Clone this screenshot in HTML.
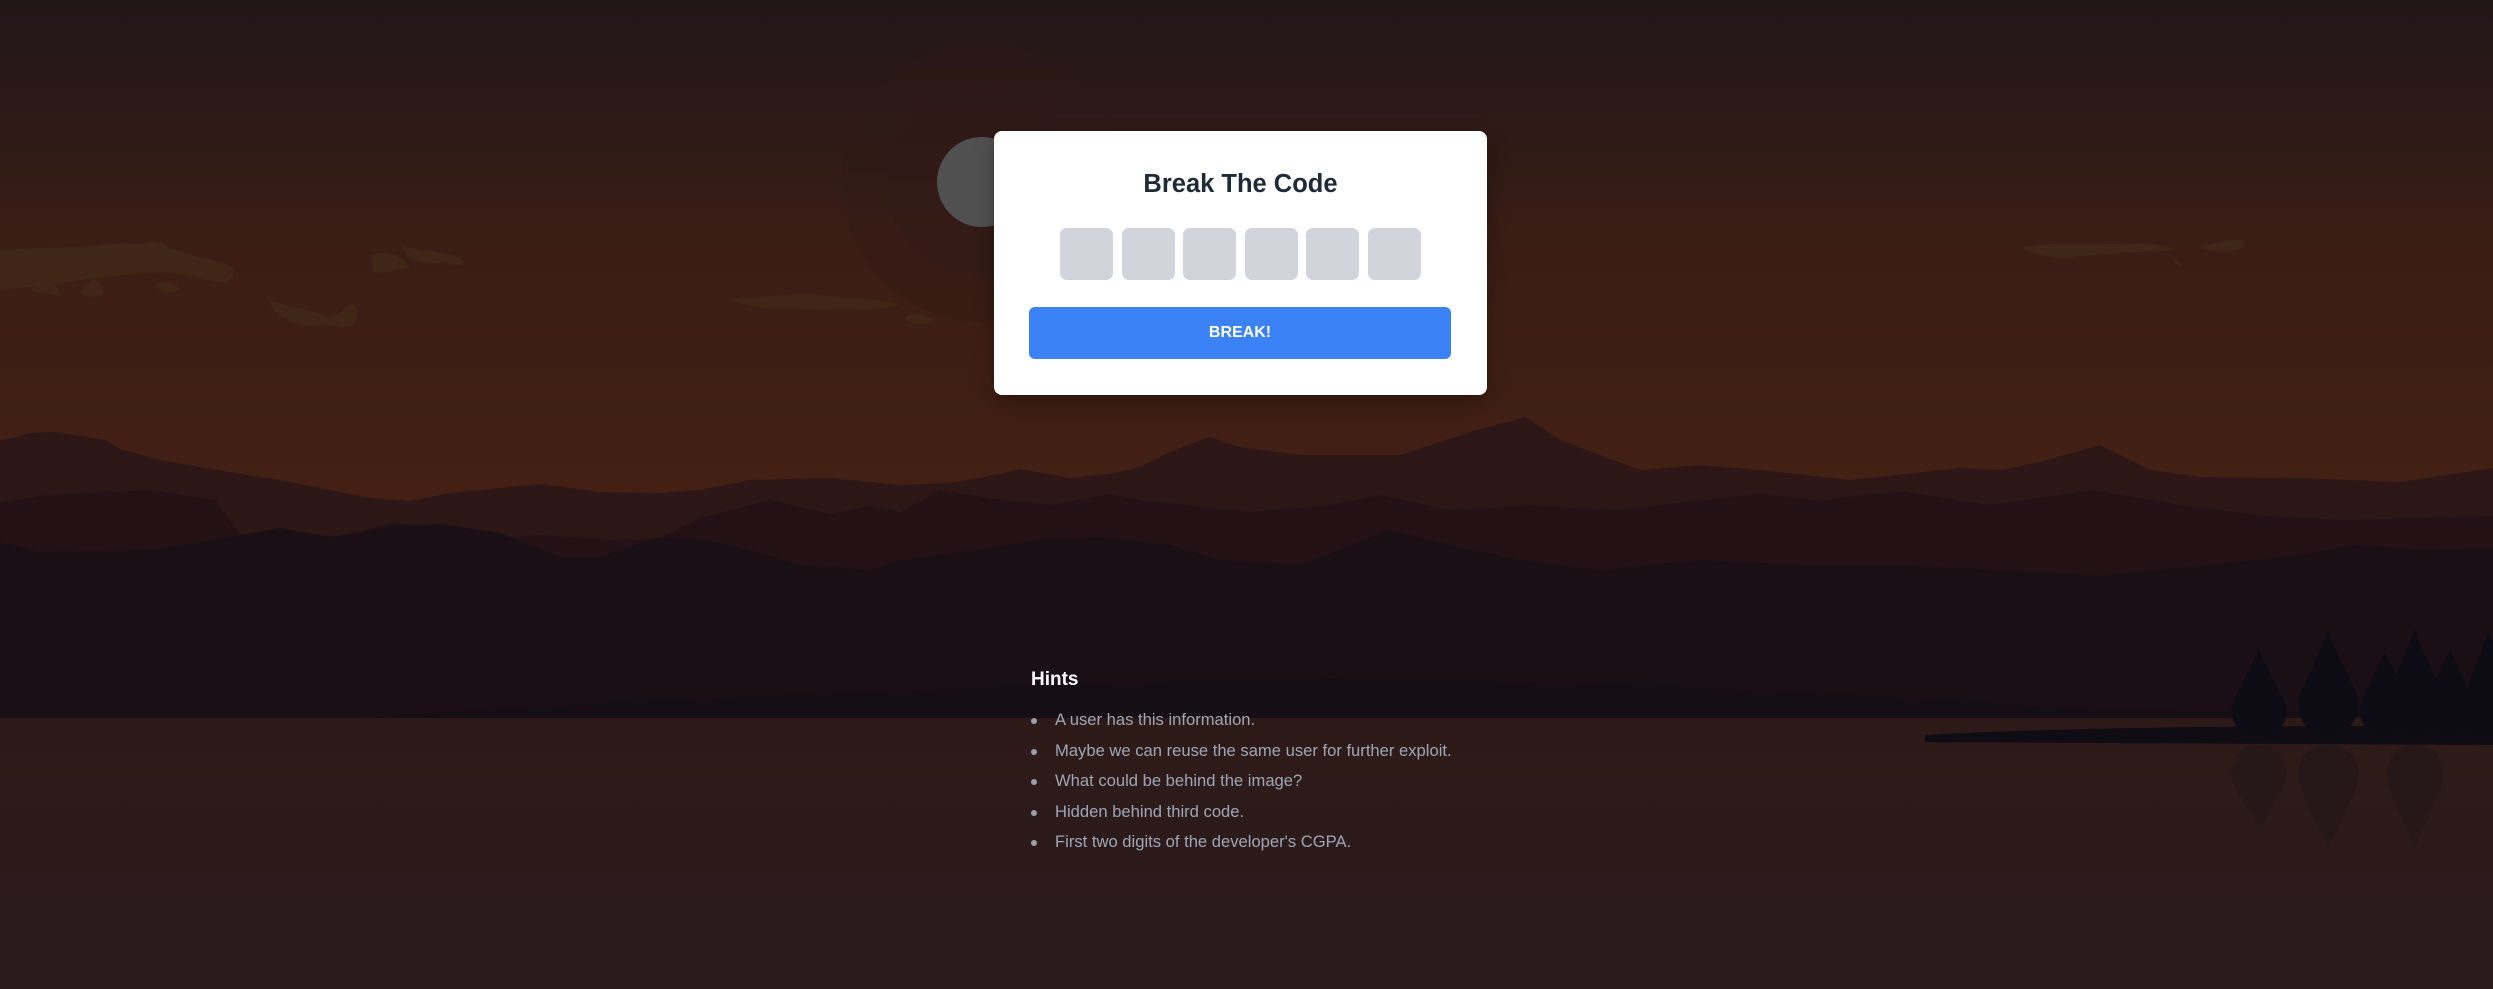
<!DOCTYPE html>
<html><head><meta charset="utf-8"><style>
html,body{margin:0;padding:0;width:2493px;height:989px;overflow:hidden;background:#2c1b1d;font-family:"Liberation Sans",sans-serif}
svg.bg{position:absolute;left:0;top:0}
.card{position:absolute;left:994px;top:131px;width:493px;height:264px;background:#fff;border-radius:8px;box-shadow:0 8px 20px rgba(0,0,0,.3)}
.title{position:absolute;left:0;width:493px;top:39px;text-align:center;font-size:25.5px;font-weight:bold;color:#1f2937}
.box{position:absolute;top:97px;width:53px;height:52px;background:#d1d5db;border-radius:7px}
.btn{position:absolute;left:35px;top:176px;width:422px;height:52px;background:#3b82f6;border-radius:6px;color:#fff;font-weight:bold;font-size:16px;text-align:center;line-height:52px}
.hints{position:absolute;left:1031px;top:669px;color:#fff;font-size:19px;font-weight:bold}
ul{position:absolute;left:1031px;top:705px;margin:0;padding:0;list-style:none;color:#9ea6b6;font-size:16.6px;font-weight:300}
li{height:30.6px;line-height:30.6px;position:relative;padding-left:24px}
li:before{content:"";position:absolute;left:0;top:13px;width:6px;height:6px;border-radius:50%;background:#9aa0aa}
</style></head><body>
<svg class="bg" width="2493" height="989" viewBox="0 0 2493 989">
<defs>
<linearGradient id="sky" x1="0" y1="0" x2="0" y2="1">
<stop offset="0" stop-color="#211619"/><stop offset="0.45" stop-color="#3a1d15"/><stop offset="1" stop-color="#442013"/></linearGradient>
<linearGradient id="wat" x1="0" y1="0" x2="0" y2="1">
<stop offset="0" stop-color="#2d1a18"/><stop offset="1" stop-color="#2c1b1e"/></linearGradient>
</defs>
<rect width="2493" height="520" fill="url(#sky)"/>
<circle cx="982" cy="182" r="140" fill="#2e1a17" opacity=".3"/>
<circle cx="982" cy="182" r="95" fill="#321b16" opacity=".35"/>
<circle cx="982" cy="182" r="45" fill="#505050"/>
<g fill="#3f2616">
<path d="M0 251 C40 245 70 250 100 245 C140 238 180 250 200 258 C230 262 245 270 225 283 C200 280 180 270 150 273 C100 275 60 285 0 290Z"/>
<path d="M138 245 C150 238 170 243 168 250 C160 255 140 252 138 245Z"/>
<path d="M180 270 C185 262 198 264 200 268 C196 274 183 274 180 270Z"/>
<path d="M155 285 C160 280 178 280 180 290 C170 293 158 292 155 285Z"/>
<path d="M30 290 L48 280 C55 285 60 290 60 297 C50 292 38 295 30 290Z"/>
<path d="M80 290 L95 278 C100 283 105 290 103 295 C95 298 82 298 80 290Z"/>
<path d="M270 300 C300 310 320 312 330 318 C345 315 345 300 355 305 C362 315 355 330 340 327 C320 322 310 330 290 322 C280 315 270 310 270 300Z"/>
<path d="M372 255 C390 250 400 255 410 268 C395 270 380 275 373 272 C372 265 372 258 372 255Z"/>
<path d="M402 245 C420 252 440 250 460 258 C470 265 460 268 445 262 C430 265 420 262 410 258 C403 250 402 248 402 245Z"/>
<path d="M730 298 C760 300 790 290 830 296 C860 300 890 300 900 305 C870 312 820 308 770 308 C745 306 728 300 730 298Z"/>
<path d="M905 318 C915 310 930 316 935 320 C925 325 910 325 905 318Z"/>
<path d="M2022 248 C2040 242 2080 244 2120 244 C2140 242 2170 245 2175 250 C2150 252 2110 252 2070 258 C2045 258 2030 252 2022 248Z"/>
<path d="M2200 247 C2220 240 2240 238 2244 242 C2245 252 2230 252 2210 251Z"/>
<path d="M2173 258 C2178 260 2182 264 2180 266 C2175 264 2172 260 2173 258Z"/>
</g>
<path fill="#2d1716" d="M0 441 L30 433 L55 432 L105 440 L120 449 L160 460 L230 472 L280 480 L370 498 L410 501 L450 493 L540 484 L600 492 L660 493 L700 490 L750 480 L830 478 L900 485 L950 483 L1000 474 L1020 469 L1070 478 L1110 474 L1140 467 L1170 452 L1210 437 L1240 447 L1300 455 L1400 455 L1470 432 L1526 417 L1560 440 L1640 470 L1700 465 L1760 470 L1850 480 L1960 468 L2000 470 L2040 462 L2100 445 L2150 470 L2200 477 L2300 478 L2400 482 L2493 468 L2493 989 L0 989Z"/>
<path fill="#231115" d="M0 503 L40 496 L100 492 L150 490 L215 500 L240 535 L290 540 L330 540 L390 523 L460 528 L500 537 L540 535 L620 540 L660 538 L700 518 L770 500 L800 507 L830 514 L870 506 L900 512 L940 490 L990 498 L1050 505 L1110 494 L1140 500 L1250 512 L1330 505 L1380 495 L1450 510 L1530 505 L1620 510 L1700 500 L1760 494 L1820 500 L1900 491 L1990 505 L2093 490 L2180 505 L2260 515 L2340 520 L2420 518 L2493 515 L2493 989 L0 989Z"/>
<path fill="#190f14" d="M0 542 L40 552 L100 551 L160 549 L230 537 L280 528 L330 537 L390 527 L440 524 L500 533 L560 557 L600 557 L660 537 L700 539 L750 550 L800 565 L870 570 L900 560 L940 555 L990 548 L1040 539 L1100 537 L1170 545 L1220 560 L1300 565 L1390 530 L1450 545 L1520 560 L1600 570 L1700 560 L1800 565 L1900 565 L2000 570 L2100 575 L2200 566 L2300 555 L2354 545 L2420 550 L2493 548 L2493 989 L0 989Z"/>
<path fill="#140e15" d="M330 720 C600 700 900 690 1200 680 C1500 675 1800 690 2100 710 L2493 715 L2493 740 L330 740Z" opacity=".8"/>
<rect y="718" width="2493" height="271" fill="url(#wat)"/>
<path fill="#0f0c14" d="M1925 735 C2050 728 2250 725 2493 726 L2493 745 L1925 742Z"/>
<g fill="#0d0b13">
<path d="M2259 650 L2284 700 C2292 720 2280 735 2259 735 C2238 735 2226 720 2234 700Z"/>
<path d="M2328 633 L2355 690 C2365 715 2350 735 2328 735 C2306 735 2292 715 2302 690Z"/>
<path d="M2385 652 L2408 700 C2415 722 2402 735 2385 735 C2368 735 2355 722 2362 700Z"/>
<path d="M2415 630 L2440 690 C2450 718 2435 735 2415 735 C2395 735 2382 718 2390 690Z"/>
<path d="M2450 650 L2474 700 C2482 722 2468 735 2450 735 C2432 735 2420 722 2426 700Z"/>
<path d="M2488 633 L2493 645 L2493 735 L2470 735 C2460 720 2462 700 2470 680Z"/>
</g>
<g fill="#241618" opacity=".8">
<path d="M2259 830 L2284 785 C2292 765 2280 745 2259 745 C2238 745 2226 765 2234 785Z"/>
<path d="M2328 850 L2355 790 C2365 765 2350 745 2328 745 C2306 745 2292 765 2302 790Z"/>
<path d="M2415 848 L2440 790 C2450 762 2435 745 2415 745 C2395 745 2382 762 2390 790Z"/>
</g>
</svg>
<div class="card">
<div class="title">Break The Code</div>
<div class="box" style="left:66px"></div>
<div class="box" style="left:128px"></div>
<div class="box" style="left:189px"></div>
<div class="box" style="left:251px"></div>
<div class="box" style="left:312px"></div>
<div class="box" style="left:374px"></div>
<div class="btn">BREAK!</div>
</div>
<div class="hints">Hints</div>
<ul>
<li>A user has this information.</li>
<li>Maybe we can reuse the same user for further exploit.</li>
<li>What could be behind the image?</li>
<li>Hidden behind third code.</li>
<li>First two digits of the developer's CGPA.</li>
</ul>
</body></html>
